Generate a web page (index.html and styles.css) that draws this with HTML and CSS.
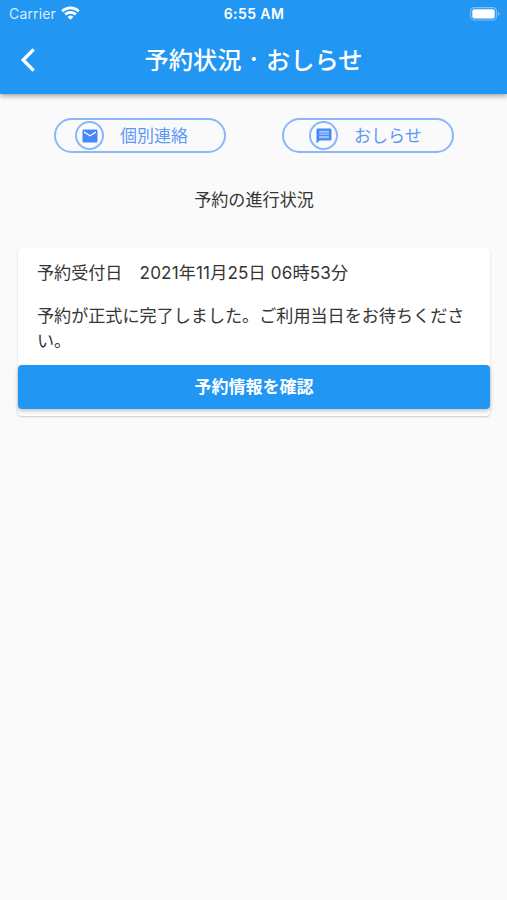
FILE: index.html
```html
<!DOCTYPE html>
<html lang="ja">
<head>
<meta charset="utf-8">
<title>予約状況・おしらせ</title>
<link rel="stylesheet" href="styles.css">
</head>
<body>
<header class="header">
  <div class="status">
    <div class="carrier"><span>Carrier</span>
      <svg class="wifi" viewBox="0 0 19 14" width="19" height="14" fill="none" stroke="#fff" stroke-width="2.7"><path d="M1.2 5.2a12 12 0 0 1 16.6 0M4.2 8.5a7.7 7.7 0 0 1 10.6 0"/><path d="M9.5 13.7 6.6 10.9a4.2 4.2 0 0 1 5.8 0Z" fill="#fff" stroke="none"/></svg>
    </div>
    <div class="clock">6:55 AM</div>
    <svg class="battery" viewBox="0 0 30 14" width="30" height="14"><rect x=".6" y=".6" width="25.8" height="12.4" rx="3.6" fill="none" stroke="#fff" stroke-opacity=".42" stroke-width="1.1"/><rect x="2.3" y="2.2" width="22.4" height="9.2" rx="2" fill="#fff"/><path d="M27.8 4.8q1.6.6 1.6 2t-1.6 2Z" fill="#fff" fill-opacity=".45"/></svg>
  </div>
  <div class="bar">
    <svg class="back" viewBox="0 0 16 26" width="16" height="26" fill="none" stroke="#fff" stroke-width="3.4"><path d="M13.7 2.4 3.2 13l10.5 10.6"/></svg>
    <h1 class="title">予約状況<span class="dot">・</span>おしらせ</h1>
  </div>
</header>
<main class="content">
  <nav class="tabs">
    <a class="pill"><span class="circle"><svg viewBox="0 0 24 24" width="18" height="18" fill="#4389f8"><path d="M20 3.4H4c-1.1 0-2 .9-2 2v13.2c0 1.1.9 2 2 2h16c1.1 0 2-.9 2-2V5.400c0-1.100-.9-2-2-2zm0 4.200-8 5-8-5V5.800l8 5 8-5z"/></svg></span><span class="label">個別連絡</span></a>
    <a class="pill news"><span class="circle"><svg viewBox="0 0 24 24" width="18" height="18" fill="#4389f8"><path d="M20 2H4c-1.1 0-2 .9-2 2v18l4-4h14c1.1 0 2-.9 2-2V4c0-1.1-.9-2-2-2z"/><path d="M5.500 5h13v10h-13z" fill="#9cc1fc"/><path d="M5.500 7.500h13v1.200h-13zm0 3.300h13V12h-13z"/></svg></span><span class="label">おしらせ</span></a>
  </nav>
  <h2 class="heading">予約の進行状況</h2>
  <section class="card">
    <p class="date">予約受付日　<span class="stamp">2021年11月25日 06時53分</span></p>
    <p class="message">予約が正式に完了しました。ご利用当日をお待ちください。</p>
    <button class="confirm">予約情報を確認</button>
  </section>
</main>
</body>
</html>
```
FILE: styles.css
```css
* { box-sizing: border-box; }
body {
  margin: 0;
  min-height: 900px;
  background: #fafafa;
  color: #353535;
  font-family: Inter, "Noto Sans CJK JP", sans-serif;
}
.header {
  height: 94px;
  background: #2196f3;
  color: #fff;
  box-shadow: 0 2px 5px rgba(0, 0, 0, .36);
}
.status {
  display: grid;
  grid-template-columns: 1fr auto 1fr;
  align-items: center;
  height: 27px;
  padding: 0 7px 0 9px;
}
.carrier {
  display: flex;
  align-items: center;
  gap: 5px;
  font-size: 14px;
  letter-spacing: .15px;
  color: #d9edfd;
}
.wifi { margin-top: -2px; }
.clock { margin-right: 1px; font-size: 14px; font-weight: 600; letter-spacing: .4px; }
.battery { justify-self: end; }
.bar {
  display: grid;
  grid-template-columns: 34px 1fr 34px;
  align-items: center;
  height: 65px;
  padding: 0 20px;
}
.title {
  margin: 0;
  text-align: center;
  font-size: 24.3px;
  line-height: 36px;
  font-weight: 500;
  white-space: nowrap;
}
.dot {
  display: inline-block;
  width: 24.3px;
  font-size: 17px;
  line-height: 20px;
  vertical-align: 3px;
}
.content { padding: 24px 17px 0 18px; }
.tabs {
  display: flex;
  justify-content: space-between;
  padding: 0 36px;
}
.pill {
  display: flex;
  align-items: center;
  width: 172px;
  height: 35px;
  padding-left: 19px;
  border: 2px solid #8cb6fa;
  border-radius: 18px;
  color: #5c98f7;
}
.news { padding-left: 25px; }
.circle {
  display: flex;
  align-items: center;
  justify-content: center;
  width: 29px;
  height: 29px;
  border: 2px solid #8cb6fa;
  border-radius: 50%;
}
.label { margin-left: 16px; font-size: 17px; line-height: 24px; }
.heading {
  margin: 34px 0 35px;
  text-align: center;
  font-size: 17.1px;
  line-height: 26px;
  font-weight: 400;
}
.card {
  height: 168px;
  padding-top: 12px;
  border-radius: 4px;
  background: #fff;
  box-shadow: 0 1px 2px rgba(0, 0, 0, .2);
}
.date, .message {
  margin: 0;
  padding: 0 19px;
  font-size: 17.1px;
  line-height: 25px;
}
.stamp { letter-spacing: .15px; }
.message { margin-top: 18px; }
.confirm {
  display: block;
  width: 100%;
  height: 44px;
  margin-top: 12px;
  padding: 0;
  border: 0;
  border-radius: 4px;
  background: #2196f3;
  color: #fff;
  font: 700 17px/25px Inter, "Noto Sans CJK JP", sans-serif;
  box-shadow: 0 2px 4px rgba(0, 0, 0, .25);
}
```
